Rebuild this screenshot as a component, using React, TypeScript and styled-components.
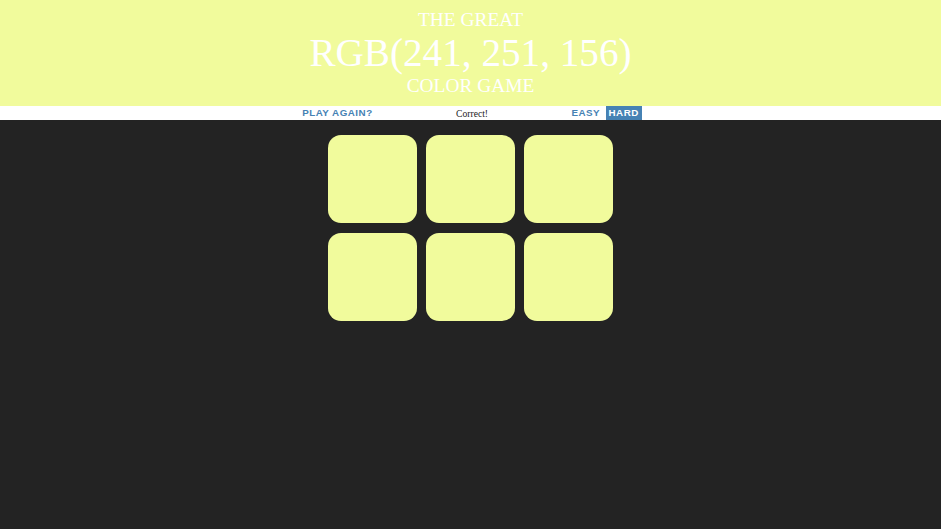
import React from "react";
import styled, { createGlobalStyle } from "styled-components";

const Global = createGlobalStyle`
  html, body { margin: 0; padding: 0; background: #232323; }
  body { font-family: "Liberation Serif", "Times New Roman", serif; }
`;

const color = "rgb(241, 251, 156)";

const Header = styled.h1`
  margin: 0;
  background: ${color};
  color: #ffffff;
  text-align: center;
  text-transform: uppercase;
  font-weight: normal;
  font-family: "Liberation Serif", "Times New Roman", serif;
  padding: 9px 0 0;
  height: 106px;
  box-sizing: border-box;
`;

const Line = styled.span<{ $big?: boolean; $mt?: number }>`
  display: block;
  font-size: ${(p) => (p.$big ? "39.2px" : "19.4px")};
  line-height: 1.1;
  margin-top: ${(p) => p.$mt ?? 0}px;
  white-space: nowrap;
`;

const Stripe = styled.div`
  background: #ffffff;
  height: 14px;
  display: flex;
  justify-content: center;
  align-items: stretch;
  gap: 2.4px;
`;

const Btn = styled.button<{ $selected?: boolean }>`
  border: none;
  margin: 0;
  padding: 0 3px;
  height: 100%;
  background: ${(p) => (p.$selected ? "steelblue" : "white")};
  color: ${(p) => (p.$selected ? "white" : "steelblue")};
  font-family: "Liberation Sans", Arial, sans-serif;
  font-weight: 700;
  font-size: 9.8px;
  letter-spacing: 0.5px;
  text-transform: uppercase;
  line-height: 14px;
  cursor: pointer;
  outline: none;
`;

const Message = styled.span`
  display: inline-block;
  width: 188px;
  text-align: center;
  font-family: "Liberation Serif", "Times New Roman", serif;
  font-size: 9.6px;
  line-height: 15px;
  color: #222;
`;

const Grid = styled.div`
  display: grid;
  grid-template-columns: repeat(3, 89px);
  grid-auto-rows: 88px;
  gap: 10px 9px;
  justify-content: center;
  margin-top: 15px;
`;

const Square = styled.div<{ $c: string }>`
  background: ${(p) => p.$c};
  border-radius: 13px;
`;

export default function App() {
  const squares = Array.from({ length: 6 }, () => color);
  return (
    <>
      <Global />
      <Header>
        <Line>The Great</Line>
        <Line $big $mt={0.5}>RGB(241, 251, 156)</Line>
        <Line $mt={1.5}>Color Game</Line>
      </Header>
      <Stripe>
        <Btn>Play Again?</Btn>
        <Message>Correct!</Message>
        <Btn>Easy</Btn>
        <Btn $selected>Hard</Btn>
      </Stripe>
      <Grid>
        {squares.map((c, i) => (
          <Square key={i} $c={c} />
        ))}
      </Grid>
    </>
  );
}
